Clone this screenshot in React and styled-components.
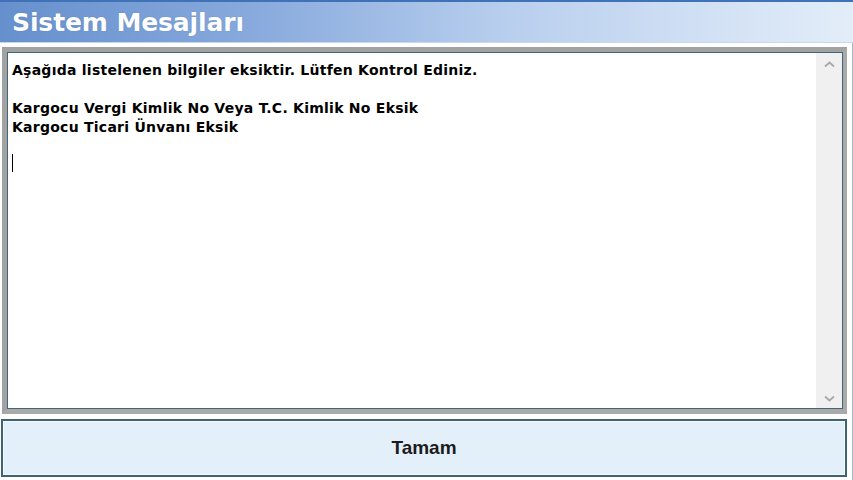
import React from "react";
import styled, { createGlobalStyle } from "styled-components";

const GlobalStyle = createGlobalStyle`
  html, body {
    margin: 0;
    padding: 0;
    background: #ffffff;
  }
  * {
    box-sizing: border-box;
  }
`;

const Window = styled.div`
  width: 853px;
  height: 480px;
  display: flex;
  flex-direction: column;
  background: #f3f7fb;
  overflow: hidden;
`;

const TitleBar = styled.div`
  height: 43px;
  flex-shrink: 0;
  display: flex;
  align-items: center;
  padding-left: 12px;
  border-top: 2px solid #3f72b6;
  border-bottom: 1px solid #c9d8ea;
  background: linear-gradient(90deg, #6690cd 0%, #88aadd 30%, #b9cfee 60%, #e3edf9 100%);
`;

const Title = styled.h1`
  margin: 0;
  font-family: "DejaVu Sans", Verdana, sans-serif;
  font-weight: bold;
  font-size: 25px;
  letter-spacing: -0.1px;
  color: #ffffff;
  text-shadow: 0 0 1px rgba(60, 90, 140, 0.5);
`;

const Body = styled.div`
  flex: 1;
  display: flex;
  flex-direction: column;
  padding: 4px 5px 0 2px;
  background: #ffffff;
  border-right: 1px solid #a9b9c6;
`;

const MessageFrame = styled.div`
  height: 367px;
  display: flex;
  border-top: 5px solid #a2a2a2;
  border-left: 5px solid #a2a2a2;
  border-bottom: 5px solid #a9a9a9;
  border-right: 4px solid #a9a9a9;
`;

const MessageBox = styled.div`
  flex: 1;
  display: flex;
  border: 1px solid #3f6777;
  background: #ffffff;
`;

const MessageText = styled.div`
  flex: 1;
  padding: 8px 4px;
  font-family: "DejaVu Sans", Tahoma, sans-serif;
  font-weight: bold;
  font-size: 14px;
  letter-spacing: 0.25px;
  line-height: 19px;
  color: #000000;
`;

const Line = styled.div`
  min-height: 19px;
  white-space: pre;
`;

const Caret = styled.span`
  display: inline-block;
  width: 1px;
  height: 18px;
  margin-top: 17px;
  background: #000000;
`;

const ScrollBar = styled.div`
  width: 26px;
  display: flex;
  flex-direction: column;
  justify-content: space-between;
  align-items: center;
  padding: 8px 0 6px;
  background: #f0f0f0;
`;

const Arrow = ({ down }) => (
  <svg width="11" height="7" viewBox="0 0 11 7">
    <path
      d={down ? "M1 1.5 L5.5 5.5 L10 1.5" : "M1 5.5 L5.5 1.5 L10 5.5"}
      fill="none"
      stroke="#a8a8a8"
      strokeWidth="1.8"
    />
  </svg>
);

const ButtonRow = styled.div`
  flex: 1;
  display: flex;
  padding: 5px 0 3px 0;
`;

const OkButton = styled.button`
  flex: 1;
  margin-left: -1px;
  border: 2px solid #3e6474;
  box-shadow: inset 0 0 0 1px #f6fbff;
  background: #e3f0fa;
  font-family: "Liberation Sans", Arial, sans-serif;
  font-weight: bold;
  font-size: 19px;
  color: #1c1c1c;
  cursor: pointer;
`;

export default function App() {
  const lines = [
    "Aşağıda listelenen bilgiler eksiktir. Lütfen Kontrol Ediniz.",
    "",
    "Kargocu Vergi Kimlik No Veya T.C. Kimlik No Eksik",
    "Kargocu Ticari Ünvanı Eksik",
  ];

  return (
    <>
      <GlobalStyle />
      <Window>
        <TitleBar>
          <Title>Sistem Mesajları</Title>
        </TitleBar>
        <Body>
          <MessageFrame>
            <MessageBox>
              <MessageText>
                {lines.map((l, i) => (
                  <Line key={i}>{l}</Line>
                ))}
                <Caret />
              </MessageText>
              <ScrollBar>
                <Arrow />
                <Arrow down />
              </ScrollBar>
            </MessageBox>
          </MessageFrame>
          <ButtonRow>
            <OkButton>Tamam</OkButton>
          </ButtonRow>
        </Body>
      </Window>
    </>
  );
}
